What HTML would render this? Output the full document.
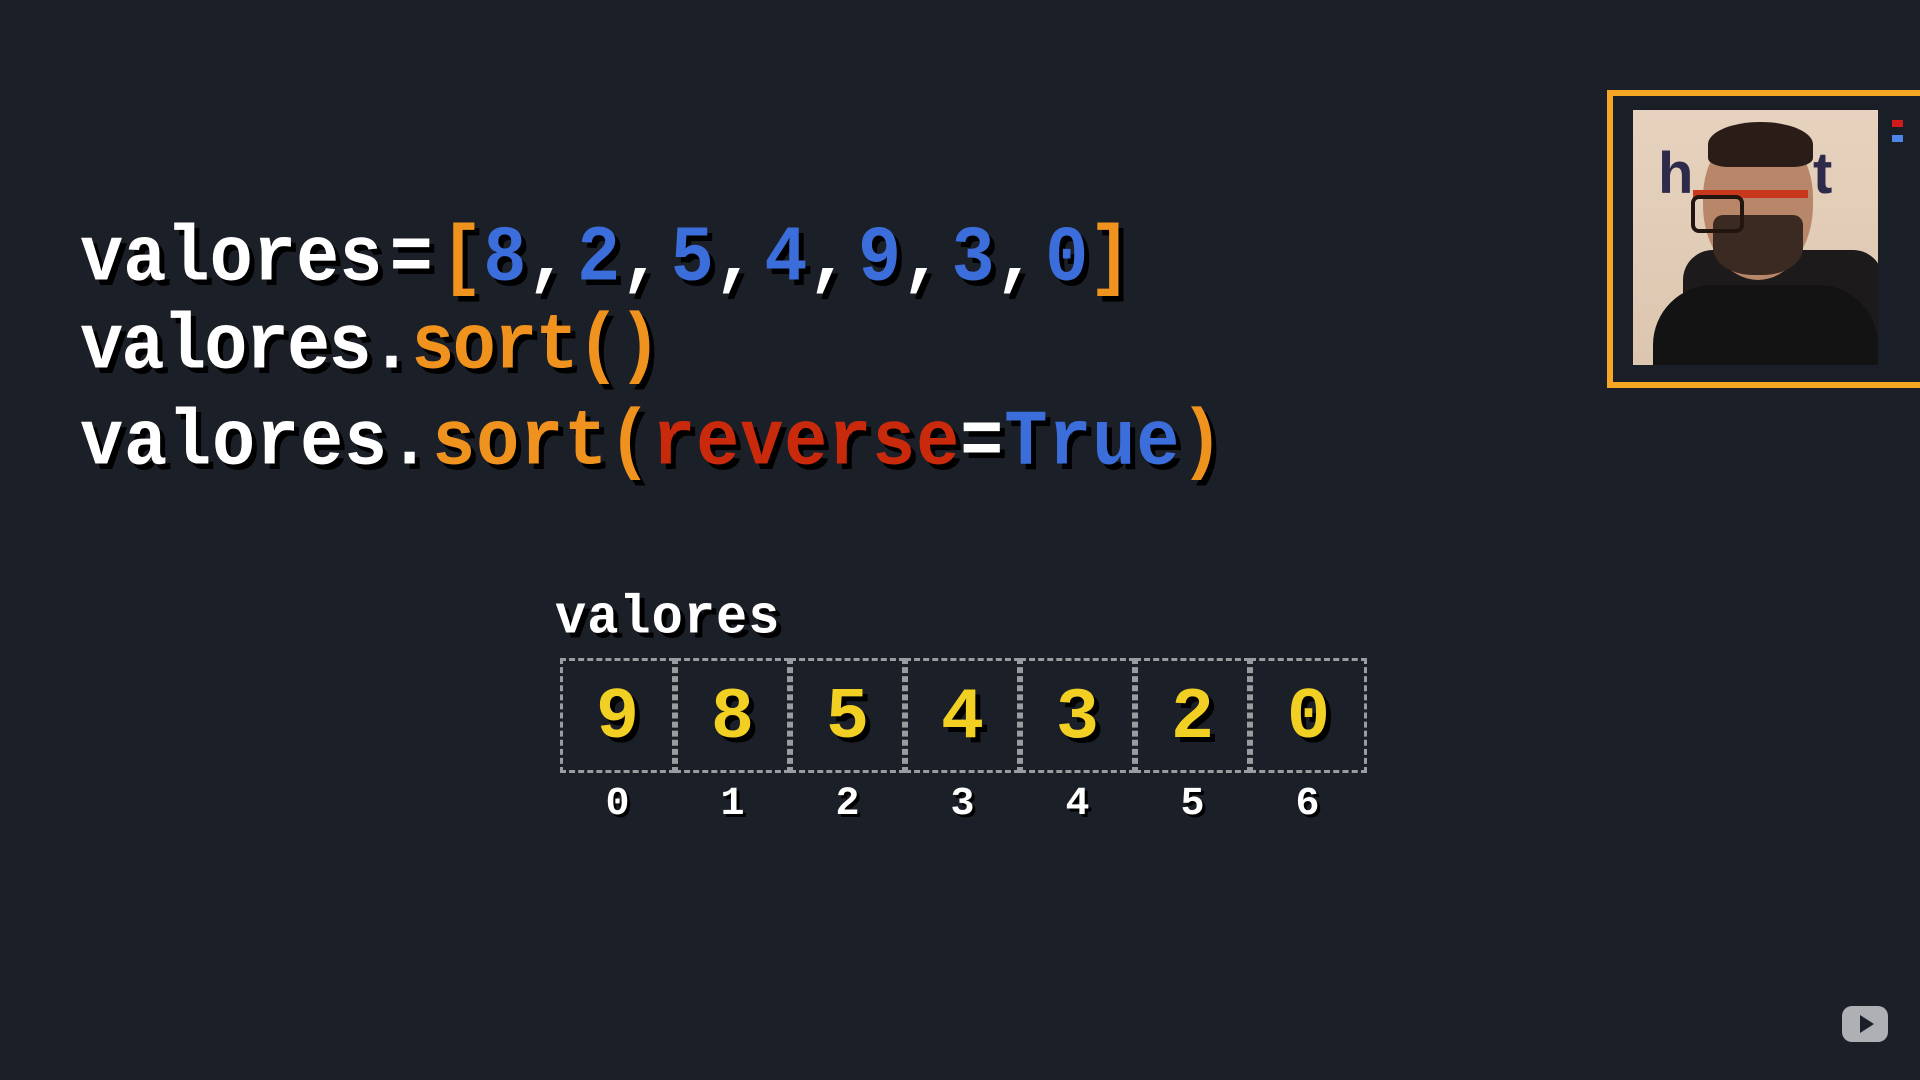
<!DOCTYPE html>
<html><head><meta charset="utf-8"><style>
html,body{margin:0;padding:0;}
body{width:1920px;height:1080px;background:#1b1f27;position:relative;overflow:hidden;font-family:"Liberation Mono",monospace;font-weight:bold;}
.l{position:absolute;left:80px;white-space:pre;color:#fff;font-size:72px;line-height:72px;transform:scaleY(1.1);transform-origin:0 100%;text-shadow:5px 5px 0 #000;}
.o{color:#f0921e}.b{color:#3b6ddb}.r{color:#c92a0c}
.cell{position:absolute;top:658px;width:115px;height:115px;box-sizing:border-box;border:3px dashed #9a9ca0;color:#f2cf23;font-size:72px;line-height:115px;text-align:center;text-shadow:5px 5px 0 #000;}
.idx{position:absolute;top:780px;width:115px;text-align:center;color:#fff;font-size:40px;line-height:50px;text-shadow:3px 3px 0 #000;}
</style></head><body>
<div class="l" style="top:226px;word-spacing:-36px">valores = <span class="o">[</span><span class="b">8</span>, <span class="b">2</span>, <span class="b">5</span>, <span class="b">4</span>, <span class="b">9</span>, <span class="b">3</span>, <span class="b">0</span><span class="o">]</span></div>
<div class="l" style="top:314px;letter-spacing:-1.8px">valores.<span class="o">sort()</span></div>
<div class="l" style="top:410px;letter-spacing:0.8px">valores.<span class="o">sort(</span><span class="r">reverse</span>=<span class="b">True</span><span class="o">)</span></div>

<div class="l" style="left:555px;top:595px;font-size:52px;line-height:50px;letter-spacing:1px;transform:scaleY(1.05)">valores</div>

<div class="cell" style="left:560px">9</div>
<div class="cell" style="left:675px">8</div>
<div class="cell" style="left:790px">5</div>
<div class="cell" style="left:905px">4</div>
<div class="cell" style="left:1020px">3</div>
<div class="cell" style="left:1135px">2</div>
<div class="cell" style="left:1250px;width:117px">0</div>
<div class="idx" style="left:560px">0</div>
<div class="idx" style="left:675px">1</div>
<div class="idx" style="left:790px">2</div>
<div class="idx" style="left:905px">3</div>
<div class="idx" style="left:1020px">4</div>
<div class="idx" style="left:1135px">5</div>
<div class="idx" style="left:1250px">6</div>

<div style="position:absolute;left:1607px;top:90px;width:330px;height:298px;box-sizing:border-box;border:6px solid #f5a623;background:#1a1f27;"></div>
<div style="position:absolute;left:1633px;top:110px;width:245px;height:255px;background:linear-gradient(180deg,#e6d2be 0%,#dcc6b0 100%);overflow:hidden;">
  <div style="position:absolute;left:25px;top:30px;font-family:'Liberation Sans',sans-serif;font-size:58px;color:#2e2a4a;font-weight:bold">h</div>
  <div style="position:absolute;left:180px;top:30px;font-family:'Liberation Sans',sans-serif;font-size:58px;color:#2e2a4a;font-weight:bold">t</div>
  <div style="position:absolute;left:50px;top:140px;width:200px;height:120px;background:#1c1a1a;border-radius:30px 30px 0 0"></div>
  <div style="position:absolute;left:70px;top:20px;width:110px;height:150px;background:#b88668;border-radius:45% 45% 50% 50%"></div>
  <div style="position:absolute;left:75px;top:12px;width:105px;height:45px;background:#2a1d18;border-radius:50% 50% 20% 20%"></div>
  <div style="position:absolute;left:80px;top:105px;width:90px;height:60px;background:#3a2a22;border-radius:10px 10px 45% 45%"></div>
  <div style="position:absolute;left:20px;top:175px;width:225px;height:90px;background:#141314;border-radius:60px 60px 0 0"></div>
  <div style="position:absolute;left:60px;top:80px;width:115px;height:8px;background:#c8381c"></div>
  <div style="position:absolute;left:58px;top:85px;width:45px;height:30px;border:4px solid #221510;border-radius:8px"></div>
</div>
<div style="position:absolute;left:1892px;top:120px;width:11px;height:7px;background:#d21a1a"></div>
<div style="position:absolute;left:1892px;top:135px;width:11px;height:7px;background:#4d86e8"></div>

<div style="position:absolute;left:1842px;top:1006px;width:46px;height:36px;background:#c9cacc;border-radius:10px;opacity:.85"></div>
<div style="position:absolute;left:1860px;top:1015px;width:0;height:0;border-left:14px solid #1b1f27;border-top:9px solid transparent;border-bottom:9px solid transparent"></div>
</body></html>
